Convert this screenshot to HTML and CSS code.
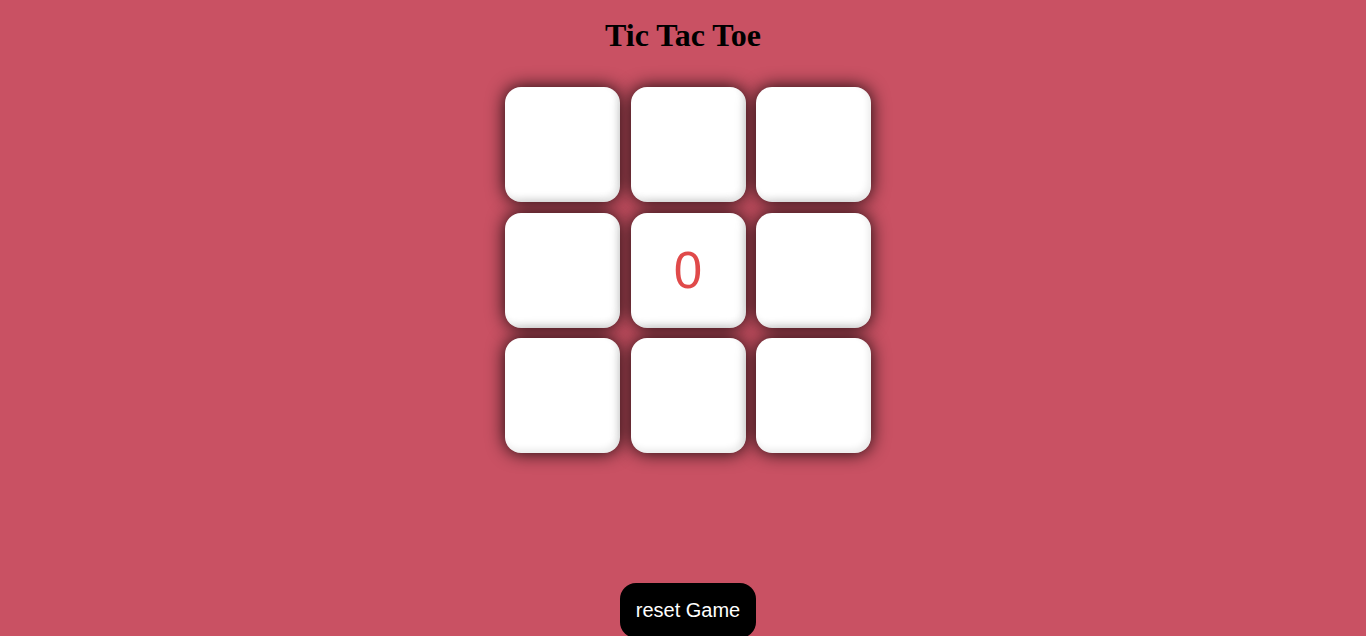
FILE: index.html
```html
<!DOCTYPE html>
<html lang="en">
<head>
<meta charset="utf-8">
<title>Tic Tac Toe</title>
<link rel="stylesheet" href="styles.css">
</head>
<body>
<h1 class="title">Tic Tac Toe</h1>
<main class="main">
  <div class="game">
    <button class="box"></button>
    <button class="box"></button>
    <button class="box"></button>
    <button class="box"></button>
    <button class="box">0</button>
    <button class="box"></button>
    <button class="box"></button>
    <button class="box"></button>
    <button class="box"></button>
  </div>
  <button class="reset">reset Game</button>
</main>
</body>
</html>
```
FILE: styles.css
```css
html, body {
  margin: 0;
  padding: 0;
}
body {
  background: #c95163;
  font-family: "Liberation Sans", Arial, sans-serif;
  height: 636px;
  overflow: hidden;
}
.title {
  margin: 17px 0 0;
  text-align: center;
  font-family: "Liberation Serif", "Times New Roman", serif;
  font-size: 32px;
  font-weight: bold;
  line-height: 37px;
  color: #000;
}
.main {
  display: flex;
  flex-direction: column;
  align-items: center;
  padding-left: 10px;
}
.game {
  margin-top: 33px;
  display: grid;
  grid-template-columns: repeat(3, 115px);
  grid-auto-rows: 115px;
  gap: 10.5px;
}
.box {
  border: none;
  border-radius: 16px;
  background: #fff;
  box-shadow: 0 0 18px rgba(0, 0, 0, 0.9), inset -3px -4px 6px rgba(0, 0, 0, 0.08);
  font-family: "Liberation Sans", Arial, sans-serif;
  font-size: 51px;
  color: #e04a4a;
  padding: 0;
}
.reset {
  margin-top: 130px;
  padding: 16px;
  font-family: "Liberation Sans", Arial, sans-serif;
  font-size: 20px;
  color: #fff;
  background: #000;
  border: none;
  border-radius: 16px;
}
```
